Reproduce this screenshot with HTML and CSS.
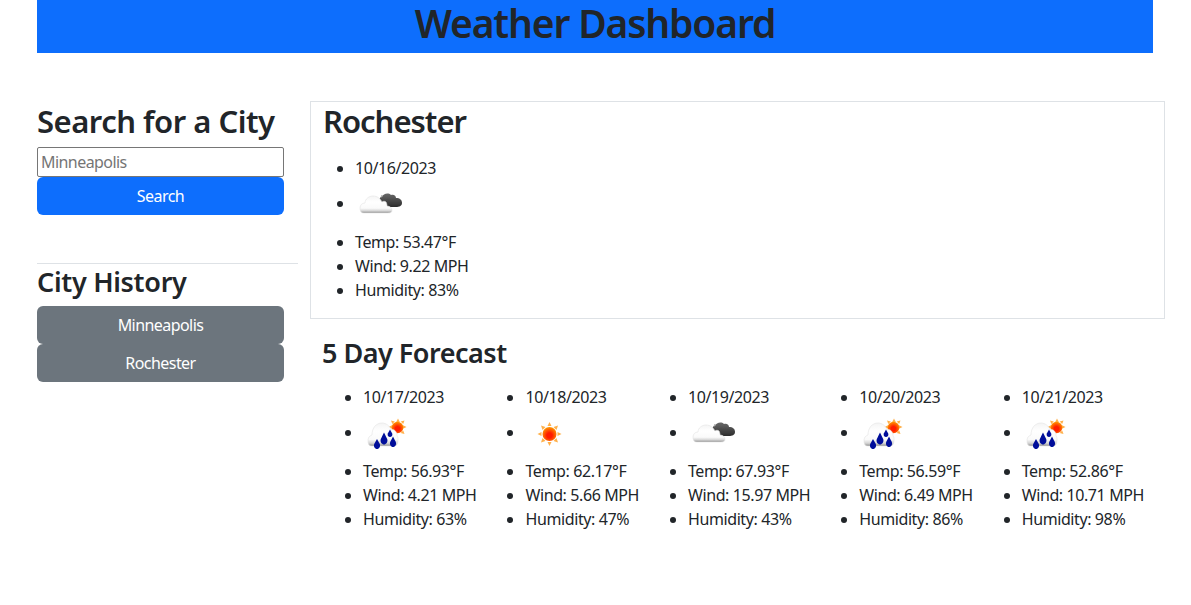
FILE: index.html
```html
<!DOCTYPE html>
<html lang="en">
<head>
    <meta charset="UTF-8">
    <meta name="viewport" content="width=device-width, initial-scale=1.0">
    <title>Weather Dashboard</title>
    <link rel="stylesheet" href="styles.css">
</head>
<body>
    <svg class="icon-defs" aria-hidden="true">
        <defs>
            <linearGradient id="whiteCloud" x1="0" y1="0" x2="0" y2="1">
                <stop offset="0" stop-color="#f4f4f4"/>
                <stop offset="0.35" stop-color="#ffffff"/>
                <stop offset="0.72" stop-color="#fafafa"/>
                <stop offset="0.88" stop-color="#d4d4d4"/>
                <stop offset="1" stop-color="#8d8d8d"/>
            </linearGradient>
            <linearGradient id="darkCloud" x1="0" y1="0" x2="0" y2="1">
                <stop offset="0" stop-color="#6a6a6a"/>
                <stop offset="1" stop-color="#2c2c2c"/>
            </linearGradient>
            <radialGradient id="sunDisc" cx="0.5" cy="0.6" r="0.6">
                <stop offset="0.3" stop-color="#ff1a00"/>
                <stop offset="1" stop-color="#ff9a00"/>
            </radialGradient>
            <filter id="soft"><feGaussianBlur stdDeviation="0.35"/></filter>
            <symbol id="icon-clouds" viewBox="0 0 50 50">
                <g filter="url(#soft)">
                    <path d="M24 24c-1-4 1-7 3-7 1-3 6-5 9-2 3-1 5 1 5 3 4 0 6 2 6 5 0 3-3 4-6 4H30c-3 0-5-1-6-3z" fill="url(#darkCloud)"/>
                    <path d="M25 18c1-1 2-2 2-3" stroke="#8a8a8a" fill="none"/>
                    <path d="M9 33c-3 0-4-2-4-5 0-3 2-5 5-5 0-4 4-7 8-7 4 0 7 2 9 6 1-1 3-1 4 0 1 2 1 3 1 4 3 0 5 2 5 4 0 2-1 3-4 3z" fill="url(#whiteCloud)" stroke="#e2e2e2" stroke-width="0.6"/>
                </g>
            </symbol>
            <symbol id="icon-sun" viewBox="0 0 50 50">
                <g filter="url(#soft)">
                    <g fill="#ffb04a">
                        <path d="M24.500 13l2 4h-4z"/>
                        <path d="M24.500 37l2-4h-4z"/>
                        <path d="M12.500 25l4-2v4z"/>
                        <path d="M36.500 25l-4-2v4z"/>
                        <path d="M16 16.500l4.500 1.500-3 3z"/>
                        <path d="M33 16.500l-4.500 1.500 3 3z"/>
                        <path d="M16 33.500l4.500-1.500-3-3z"/>
                        <path d="M33 33.500l-4.500-1.500 3-3z"/>
                    </g>
                    <circle cx="24.500" cy="25" r="7" fill="url(#sunDisc)"/>
                </g>
            </symbol>
            <symbol id="icon-rain" viewBox="0 0 50 50">
                <g filter="url(#soft)">
                    <g fill="#ffb04a">
                        <path d="M35 9.500l1.800 3.500h-3.600z"/>
                        <path d="M25.500 18l3.500-1.800v3.600z"/>
                        <path d="M43.500 18l-3.500-1.800v3.600z"/>
                        <path d="M28 11.500l3.800 1-2.500 2.500z"/>
                        <path d="M41.500 11.500l-3.800 1 2.500 2.500z"/>
                        <path d="M41.500 25l-3.800-1 2.500-2.500z"/>
                    </g>
                    <circle cx="34.500" cy="18.500" r="5.800" fill="url(#sunDisc)"/>
                    <path d="M9 37c-3 0-4-2-4-5 0-3 1-5 4-6 0-7 4-12 10-12 4 0 8 3 9 7 2-1 4 0 5 2 1 1 1 3 1 4 1 1 1 2 1 4 0 3-1 6-4 6z" fill="url(#whiteCloud)" stroke="#e2e2e2" stroke-width="0.6"/>
                    <g fill="#00119a">
                        <path d="M14 30l2.800 5c1 3.500-1.300 5-2.800 5s-3.800-1.500-2.800-5z"/>
                        <path d="M21 23.500l3.200 6.500c1 3-1.200 5.500-3.200 5.500s-4.200-2.500-3.200-5.500z"/>
                        <path d="M30 27.500l2.800 5.500c1 3-1.300 5-2.800 5s-3.800-2-2.800-5z"/>
                        <path d="M27 20.500l2.200 4c.8 2-.7 3.500-2.200 3.500s-3-1.500-2.200-3.500z"/>
                    </g>
                </g>
            </symbol>
        </defs>
    </svg>

    <header class="page-header">
        <h1>Weather Dashboard</h1>
    </header>

    <main class="layout">
        <aside class="sidebar">
            <h2 class="search-title">Search for a City</h2>
            <form class="search-form">
                <input type="text" placeholder="Minneapolis">
                <button type="button" class="btn btn-primary">Search</button>
            </form>
            <hr>
            <h3 class="history-title">City History</h3>
            <div class="history">
                <button type="button" class="btn btn-secondary">Minneapolis</button>
                <button type="button" class="btn btn-secondary">Rochester</button>
            </div>
        </aside>

        <section class="content">
            <div class="current">
                <h2 class="city-title">Rochester</h2>
                <ul>
                    <li>10/16/2023</li>
                    <li class="icon-item"><svg class="weather-icon"><use href="#icon-clouds"/></svg></li>
                    <li>Temp: 53.47°F</li>
                    <li>Wind: 9.22 MPH</li>
                    <li>Humidity: 83%</li>
                </ul>
            </div>

            <h3 class="forecast-title">5 Day Forecast</h3>
            <div class="forecast">
                <ul>
                    <li>10/17/2023</li>
                    <li class="icon-item"><svg class="weather-icon"><use href="#icon-rain"/></svg></li>
                    <li>Temp: 56.93°F</li>
                    <li>Wind: 4.21 MPH</li>
                    <li>Humidity: 63%</li>
                </ul>
                <ul>
                    <li>10/18/2023</li>
                    <li class="icon-item"><svg class="weather-icon"><use href="#icon-sun"/></svg></li>
                    <li>Temp: 62.17°F</li>
                    <li>Wind: 5.66 MPH</li>
                    <li>Humidity: 47%</li>
                </ul>
                <ul>
                    <li>10/19/2023</li>
                    <li class="icon-item"><svg class="weather-icon"><use href="#icon-clouds"/></svg></li>
                    <li>Temp: 67.93°F</li>
                    <li>Wind: 15.97 MPH</li>
                    <li>Humidity: 43%</li>
                </ul>
                <ul>
                    <li>10/20/2023</li>
                    <li class="icon-item"><svg class="weather-icon"><use href="#icon-rain"/></svg></li>
                    <li>Temp: 56.59°F</li>
                    <li>Wind: 6.49 MPH</li>
                    <li>Humidity: 86%</li>
                </ul>
                <ul>
                    <li>10/21/2023</li>
                    <li class="icon-item"><svg class="weather-icon"><use href="#icon-rain"/></svg></li>
                    <li>Temp: 52.86°F</li>
                    <li>Wind: 10.71 MPH</li>
                    <li>Humidity: 98%</li>
                </ul>
            </div>
        </section>
    </main>
</body>
</html>
```

FILE: styles.css
```css
body {
    font-family: "Noto Sans", "Open Sans", sans-serif;
    font-size: 16px;
    line-height: 1.5;
    color: #212529;
    background-color: #fff;
    margin: 0;
    padding: 0;
}
.icon-defs {
    width: 0;
    height: 0;
    overflow: hidden;
    display: block;
}
h1, h2, h3 {
    font-weight: 600;
    margin: 0;
}
h1 {
    font-size: 39px;
    line-height: 46px;
    letter-spacing: -1.15px;
}
h2 {
    font-size: 31px;
    line-height: 36px;
}
h3 {
    font-size: 27px;
    line-height: 32px;
}
ul {
    margin: 0;
    padding-left: 32px;
    letter-spacing: -0.025em;
}
.page-header {
    width: 1116px;
    height: 53px;
    margin-left: 37px;
    background-color: #0d6efd;
    text-align: center;
}
.layout {
    display: flex;
    gap: 12px;
    margin-top: 48px;
    padding-left: 37px;
}
.sidebar {
    width: 261px;
    padding-top: 2px;
    flex-shrink: 0;
}
.search-title {
    margin-bottom: 8px;
    letter-spacing: -0.5px;
}
.search-form {
    display: flex;
    flex-direction: column;
    width: 247px;
}
.search-form input {
    height: 30px;
    box-sizing: border-box;
    padding: 1px 3px;
    border: 1px solid #767676;
    border-radius: 2px;
    font-family: inherit;
    font-size: 16px;
    letter-spacing: -0.035em;
}
.btn {
    display: block;
    width: 247px;
    height: 38px;
    border: none;
    border-radius: 6px;
    color: #fff;
    font-family: inherit;
    font-size: 16px;
    letter-spacing: -0.035em;
    cursor: pointer;
}
.btn-primary {
    background-color: #0d6efd;
}
.btn-secondary {
    background-color: #6c757d;
}
.sidebar hr {
    border: none;
    border-top: 1px solid #dee2e6;
    margin: 48px 0 2px;
}
.history-title {
    margin-bottom: 8px;
    letter-spacing: -0.3px;
}
.content {
    width: 855px;
}
.current {
    border: 1px solid #dee2e6;
    padding: 1px 12px 16px;
}
.city-title {
    margin-bottom: 17px;
    letter-spacing: -1px;
}
.icon-item {
    height: 50px;
}
.weather-icon {
    width: 50px;
    height: 50px;
    vertical-align: middle;
}
.forecast-title {
    margin: 18px 0 16px 12px;
    letter-spacing: -0.5px;
}
.forecast {
    display: flex;
    justify-content: space-between;
    padding: 0 21px 0 21px;
}
```
